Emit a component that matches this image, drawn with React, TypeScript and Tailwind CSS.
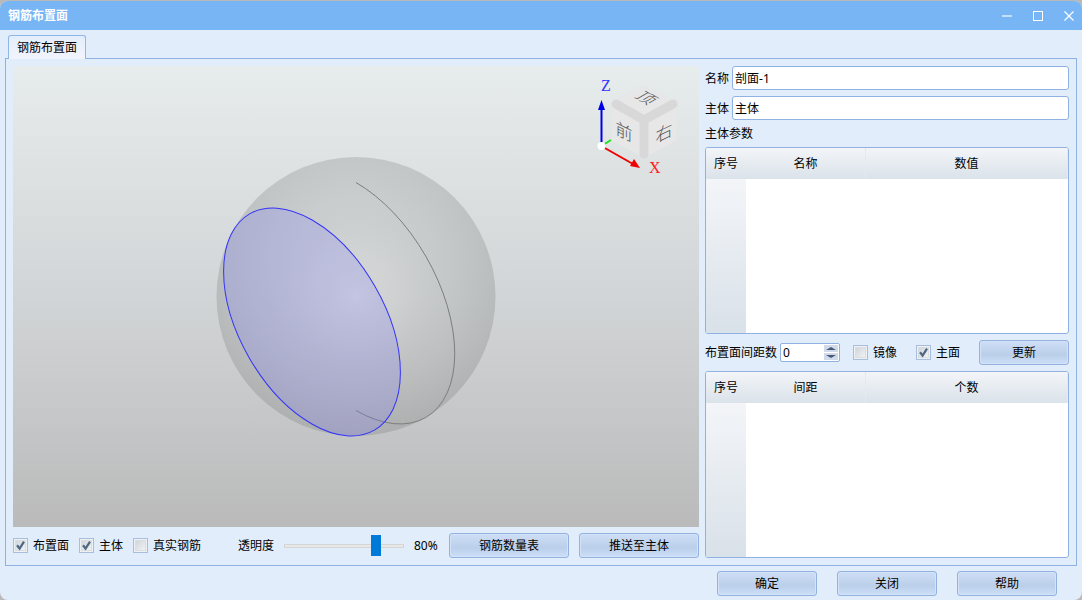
import { useId, useState, type ReactNode } from 'react'

interface CheckFieldProps {
  label: string
  defaultChecked?: boolean
}

interface ParamTableProps {
  label: string
  columns: [string, string, string]
}

const CheckField = ({ label, defaultChecked }: CheckFieldProps) => (
  <label className="flex shrink-0 items-center gap-[5px] whitespace-nowrap">
    <span className="relative flex size-[15px]">
      <input
        type="checkbox"
        defaultChecked={defaultChecked}
        className="peer size-[15px] appearance-none border border-[#a9bddd] bg-linear-to-br from-[#c9d0d6] to-[#f8f8f8] shadow-[inset_0_0_0_1px_#eef1f4,inset_0_0_0_2px_#d9dee3]"
      />
      <svg
        className="pointer-events-none absolute inset-0 hidden peer-checked:block"
        width="15"
        height="15"
        viewBox="0 0 15 15"
        fill="none"
        stroke="#4d6785"
      >
        <path strokeWidth="2.2" d="M4 7.2l2.6 3.3L11 3.6" />
      </svg>
    </span>
    {label}
  </label>
)

const PushButton = ({ children, width }: { children: ReactNode; width: string }) => (
  <button
    type="button"
    className={`h-[25px] shrink-0 rounded-[3px] border border-[#94b2e0] bg-linear-to-b from-[#cbdcf4] from-10% via-[#bbcfea] via-60% to-[#cbddf6] to-95% shadow-[inset_0_0_0_1px_#d3e2f7] ${width}`}
  >
    {children}
  </button>
)

const TextField = ({ label, value }: { label: string; value: string }) => {
  const id = useId()

  return (
    <div className="flex items-center gap-[3px]">
      <label htmlFor={id} className="shrink-0">
        {label}
      </label>
      <input
        id={id}
        defaultValue={value}
        className="h-6 min-w-0 flex-1 rounded-[3px] border border-[#8fb2e3] bg-white px-0.5 outline-none"
      />
    </div>
  )
}

const ParamTable = ({ label, columns }: ParamTableProps) => (
  <div className="min-h-0 flex-1 overflow-hidden rounded-[3px] border border-[#8fb2e3] bg-white">
    <table aria-label={label} className="h-full w-full table-fixed border-separate border-spacing-0">
      <thead>
        <tr className="h-[31px] bg-linear-to-b from-[#f3f5f8] to-[#dae2ea]">
          <th className="w-10 p-0 font-normal">{columns[0]}</th>
          <th className="w-[120px] border-r border-[#e1ebf7] p-0 font-normal">{columns[1]}</th>
          <th className="border-r border-[#e1ebf7] p-0 font-normal">{columns[2]}</th>
        </tr>
      </thead>
      <tbody>
        <tr>
          <td className="bg-linear-to-b from-[#f3f5f8] to-[#d9e1e9]" />
          <td />
          <td />
        </tr>
      </tbody>
    </table>
  </div>
)

// Sphere cut by the placement plane, seen in isometric view
const SphereModel = () => (
  <svg className="h-full w-full" viewBox="0 0 686 461" fill="none">
    <defs>
      <radialGradient id="sphere" cx="0.5" cy="0.5" r="0.5">
        <stop offset="0" stopColor="#e2e3e0" stopOpacity="0.45" />
        <stop offset="0.3" stopColor="#c4c4c0" stopOpacity="0.26" />
        <stop offset="0.7" stopColor="#848683" stopOpacity="0.2" />
        <stop offset="1" stopColor="#545654" stopOpacity="0.2" />
      </radialGradient>
    </defs>
    <circle cx="343" cy="230.5" r="139.5" fill="url(#sphere)" />
    <path d="M343 116.5A139.5 80.5 60 0 1 343 344.5" stroke="#7c7d7d" />
    <ellipse
      cx="299"
      cy="256"
      rx="124.8"
      ry="72.3"
      transform="rotate(60 299 256)"
      fill="#7878ff"
      fillOpacity="0.22"
      stroke="#3434f8"
    />
  </svg>
)

const ViewCube = () => (
  <svg
    className="absolute top-0 right-0"
    width="110"
    height="120"
    viewBox="0 0 110 120"
    fontFamily="'Noto Sans CJK SC', sans-serif"
  >
    <path
      d="M55 22L85 37L85 73L55 89L25 73L25 37Z"
      fill="#e7e7e7"
      stroke="#e7e7e7"
      strokeWidth="5"
      strokeLinejoin="round"
    />
    <path
      d="M27 38L55 54L84 38M55 54V88"
      fill="none"
      stroke="#d8d8d8"
      strokeWidth="9"
      strokeLinecap="round"
      strokeLinejoin="round"
    />
    <g fill="#555" fontSize="17" fontWeight="300" textAnchor="middle">
      <text transform="matrix(0.87 0.5 -0.87 0.5 52 35)">顶</text>
      <text transform="translate(35 72) skewY(26)">前</text>
      <text transform="translate(75 73) skewY(-26)">右</text>
    </g>
    <path d="M14 79L22 74" stroke="#1fe01f" strokeWidth="2" />
    <path d="M12.5 78V42" stroke="#0000e6" strokeWidth="2" />
    <path d="M12.5 34L9 44H16Z" fill="#0000e6" />
    <path d="M14 81L44 98" stroke="#f00000" strokeWidth="2" />
    <path d="M51 102L41 100L45 93Z" fill="#f00000" />
    <circle cx="12.5" cy="80" r="4" fill="#fff" />
    <g fontFamily="'Liberation Serif', serif" fontSize="16">
      <text x="12" y="25" fill="#3434ff">Z</text>
      <text x="60" y="107" fill="#ff2020">X</text>
    </g>
  </svg>
)

const WindowControls = () => (
  <div className="flex gap-[21px]">
    <button type="button" aria-label="最小化">
      <svg width="10" height="10" viewBox="0 0 10 10">
        <path d="M0 5H10" stroke="#c4dffa" strokeWidth="2" />
      </svg>
    </button>
    <button type="button" aria-label="最大化">
      <svg width="10" height="10" viewBox="0 0 10 10">
        <rect x="0.5" y="0.5" width="9" height="9" fill="none" stroke="#fff" />
      </svg>
    </button>
    <button type="button" aria-label="关闭窗口">
      <svg width="10" height="10" viewBox="0 0 10 10">
        <path d="M0.5 0.5L9.5 9.5M9.5 0.5L0.5 9.5" stroke="#fff" strokeWidth="1.2" />
      </svg>
    </button>
  </div>
)

const CountSpinner = () => {
  const [count, setCount] = useState(0)

  return (
    <div className="flex h-[19px] w-[60px] rounded-[2px] border border-[#8fb2e3] bg-white pr-px">
      <input
        id="gap-count"
        value={count}
        onChange={(e) => setCount(Number(e.target.value) || 0)}
        className="min-w-0 flex-1 pl-0.5 outline-none"
      />
      <div className="flex w-3.5 flex-col justify-center gap-px">
        <button
          type="button"
          aria-label="增加"
          onClick={() => setCount(count + 1)}
          className="flex h-[7px] items-center justify-center bg-[#cfdaea]"
        >
          <svg width="10" height="3" viewBox="0 0 10 3">
            <path d="M0 3L5 0L10 3Z" fill="#4a5878" />
          </svg>
        </button>
        <button
          type="button"
          aria-label="减少"
          onClick={() => setCount(Math.max(0, count - 1))}
          className="flex h-[7px] items-center justify-center bg-[#cfdaea]"
        >
          <svg width="10" height="3" viewBox="0 0 10 3">
            <path d="M0 0L5 3L10 0Z" fill="#4a5878" />
          </svg>
        </button>
      </div>
    </div>
  )
}

export default function App() {
  const [opacity, setOpacity] = useState(80)

  return (
    <div className="h-screen bg-[#b9b9b7] pt-px font-['Noto_Sans','Noto_Sans_CJK_SC',sans-serif] text-[12px] leading-[15px] text-black">
      <div className="flex h-full flex-col overflow-hidden rounded-lg bg-[#e1edfb]">
        {/* Title bar */}
        <header className="flex h-[29px] shrink-0 items-center justify-between bg-[#78b5f4] px-2 text-white">
          <h1 className="font-bold">钢筋布置面</h1>
          <WindowControls />
        </header>

        <main className="flex min-h-0 flex-1 flex-col px-[5px] pt-[5px]">
          <div role="tablist" className="flex px-[3px]">
            <button
              type="button"
              role="tab"
              aria-selected="true"
              className="relative z-10 -mb-px h-6 rounded-t-[3px] border border-b-0 border-[#8fb8e8] bg-linear-to-b from-[#e4eefb] to-[#f1f4fd] px-2"
            >
              钢筋布置面
            </button>
          </div>

          <div className="flex min-h-0 flex-1 gap-1.5 border border-[#8fb2e3] p-[7px]">
            {/* Model view */}
            <section className="flex min-w-0 flex-1 flex-col gap-1.5">
              <div className="relative min-h-0 flex-1 bg-linear-to-b from-[#e7ecec] via-[#d2d5d7] via-50% to-[#bababa]">
                <SphereModel />
                <ViewCube />
              </div>

              <div className="flex items-center gap-2.5">
                <CheckField label="布置面" defaultChecked />
                <CheckField label="主体" defaultChecked />
                <CheckField label="真实钢筋" />
                <label htmlFor="opacity" className="ml-auto shrink-0">
                  透明度
                </label>
                <input
                  id="opacity"
                  type="range"
                  min={0}
                  max={100}
                  value={opacity}
                  onChange={(e) => setOpacity(Number(e.target.value))}
                  className="h-1 w-[120px] appearance-none border border-[#d5d5d5] bg-[#e8e8e8] [&::-webkit-slider-thumb]:h-[21px] [&::-webkit-slider-thumb]:w-2.5 [&::-webkit-slider-thumb]:appearance-none [&::-webkit-slider-thumb]:bg-[#007ad9]"
                />
                <output htmlFor="opacity" className="w-[25px]">
                  {opacity}%
                </output>
                <PushButton width="w-[120px]">钢筋数量表</PushButton>
                <PushButton width="w-[120px]">推送至主体</PushButton>
              </div>
            </section>

            {/* Parameters */}
            <section className="flex w-[364px] shrink-0 flex-col gap-1.5">
              <TextField label="名称" value="剖面-1" />
              <TextField label="主体" value="主体" />
              <h2>主体参数</h2>
              <ParamTable label="主体参数" columns={['序号', '名称', '数值']} />

              <div className="flex items-center justify-between">
                <div className="flex items-center gap-[3px]">
                  <label htmlFor="gap-count">布置面间距数</label>
                  <CountSpinner />
                </div>
                <div className="flex items-center gap-[19px] pr-1.5">
                  <CheckField label="镜像" />
                  <CheckField label="主面" defaultChecked />
                </div>
                <PushButton width="w-[90px]">更新</PushButton>
              </div>

              <ParamTable label="布置面间距" columns={['序号', '间距', '个数']} />
            </section>
          </div>
        </main>

        <footer className="flex shrink-0 justify-end gap-5 pt-[5px] pr-[25px] pb-1">
          <PushButton width="w-[100px]">确定</PushButton>
          <PushButton width="w-[100px]">关闭</PushButton>
          <PushButton width="w-[100px]">帮助</PushButton>
        </footer>
      </div>
    </div>
  )
}
